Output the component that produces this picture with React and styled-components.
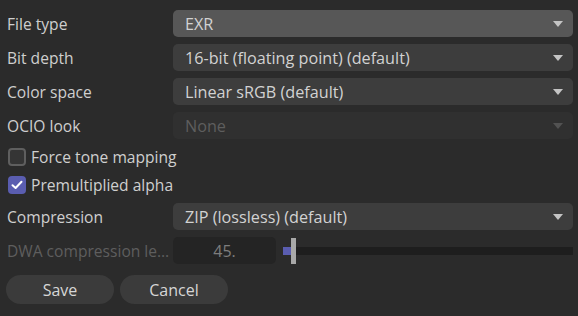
import React from 'react';
import styled, { createGlobalStyle } from 'styled-components';

const GlobalStyle = createGlobalStyle`
    html, body {
        margin: 0;
        padding: 0;
        background: #2b2b2b;
    }
    body {
        font-family: "Open Sans", "Noto Sans", sans-serif;
        font-size: 15.6px;
        color: #cfcfcf;
    }
`

const Panel = styled.div`
    width: 578px;
    height: 316px;
    box-sizing: border-box;
    padding: 10px 5px 0 7px;
    display: flex;
    flex-direction: column;
    gap: 7px;
    background: #2b2b2b;
`

const Row = styled.div`
    display: grid;
    grid-template-columns: 166px 1fr;
    align-items: center;
    height: 27px;
`

const Label = styled.div`
    min-width: 0;
    padding-right: 1px;
    color: ${props => props.disabled ? '#5e5e5e' : '#cfcfcf'};
    white-space: nowrap;
    overflow: hidden;
    text-overflow: ellipsis;
`

const Select = styled.div`
    height: 27px;
    border-radius: 5px;
    background: ${props => props.hover ? '#575757' : props.disabled ? '#303030' : '#3d3d3d'};
    color: ${props => props.disabled ? '#5e5e5e' : '#d2d2d2'};
    font-size: 16.2px;
    display: flex;
    align-items: center;
    justify-content: space-between;
    padding: 0 10px 0 12px;
`

const Arrow = styled.span`
    width: 0;
    height: 0;
    border-left: 5.5px solid transparent;
    border-right: 5.5px solid transparent;
    border-top: 6px solid ${props => props.disabled ? '#525252' : '#c4c4c4'};
`

const CheckRow = styled.label`
    display: flex;
    align-items: center;
    gap: 5px;
    height: 22px;
    padding-left: 1px;
    margin-top: ${props => props.first ? '0' : '-1px'};
`

const Box = styled.span`
    width: 18px;
    height: 18px;
    box-sizing: border-box;
    border-radius: 4px;
    border: ${props => props.checked ? 'none' : '2px solid #5f5f5f'};
    background: ${props => props.checked ? '#5a5db0' : '#353535'};
    display: flex;
    align-items: center;
    justify-content: center;
`

const NumberField = styled.div`
    width: 103px;
    height: 27px;
    border-radius: 5px;
    background: #242424;
    color: #7d7d7d;
    font-size: 16px;
    display: flex;
    align-items: center;
    justify-content: center;
`

const SliderWrap = styled.div`
    display: flex;
    align-items: center;
    gap: 7px;
`

const Track = styled.div`
    position: relative;
    flex: 1;
    height: 8px;
    background: #1e1e1e;
`

const Fill = styled.div`
    position: absolute;
    left: 0;
    top: 0;
    bottom: 0;
    background: #5a5db0;
`

const Handle = styled.div`
    position: absolute;
    top: -9px;
    width: 5px;
    height: 26px;
    background: #a8a8a8;
`

const Buttons = styled.div`
    display: flex;
    gap: 6px;
    margin-top: 4px;
`

const Button = styled.button`
    width: 108px;
    height: 29px;
    border: none;
    border-radius: 15px;
    background: #3b3b3b;
    color: #d6d6d6;
    font-family: inherit;
    font-size: 16px;
    margin-left: ${props => props.first ? '-1px' : '0'};
`

const selects = [
    { label: 'File type', value: 'EXR', hover: true },
    { label: 'Bit depth', value: '16-bit (floating point) (default)' },
    { label: 'Color space', value: 'Linear sRGB (default)' },
    { label: 'OCIO look', value: 'None', disabled: true },
];

function Check(props) {
    return (
        <CheckRow first={props.first}>
            <Box checked={props.checked}>
                {props.checked && (
                    <svg width="12" height="10" viewBox="0 0 12 10">
                        <path d="M1.5 5.2 L4.6 8 L10.5 1.8" fill="none" stroke="#fff" strokeWidth="2" strokeLinecap="round" strokeLinejoin="round" />
                    </svg>
                )}
            </Box>
            <span>{props.label}</span>
        </CheckRow>
    )
}

export default function App() {
    const dwa = 45;
    const pct = 2.7;
    return (
        <Panel>
            <GlobalStyle />
            {selects.map((s) => (
                <Row key={s.label}>
                    <Label>{s.label}</Label>
                    <Select hover={s.hover} disabled={s.disabled}>
                        <span>{s.value}</span>
                        <Arrow disabled={s.disabled} />
                    </Select>
                </Row>
            ))}
            <Check first label="Force tone mapping" />
            <Check checked label="Premultiplied alpha" />
            <Row>
                <Label>Compression</Label>
                <Select>
                    <span>ZIP (lossless) (default)</span>
                    <Arrow />
                </Select>
            </Row>
            <Row>
                <Label disabled>DWA compression level</Label>
                <SliderWrap>
                    <NumberField>{dwa}.</NumberField>
                    <Track>
                        <Fill style={{ width: pct + '%' }} />
                        <Handle style={{ left: pct + '%' }} />
                    </Track>
                </SliderWrap>
            </Row>
            <Buttons>
                <Button first>Save</Button>
                <Button>Cancel</Button>
            </Buttons>
        </Panel>
    )
}
